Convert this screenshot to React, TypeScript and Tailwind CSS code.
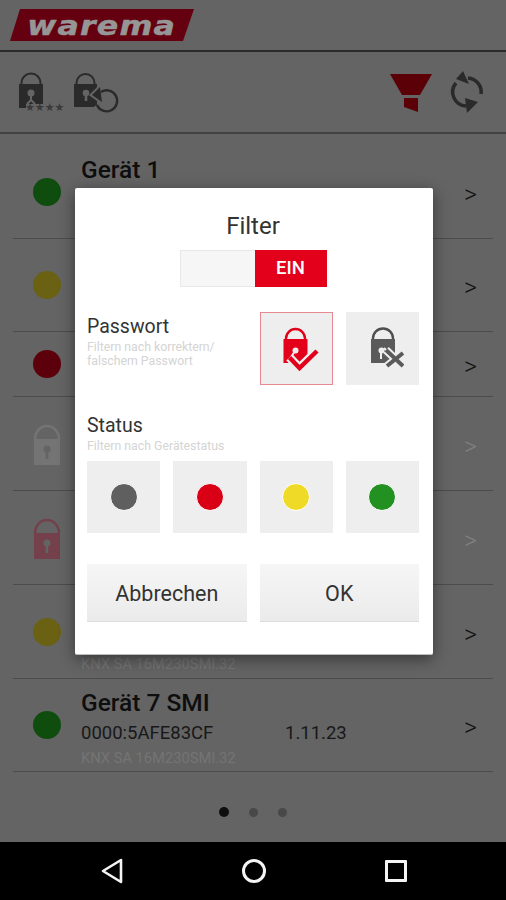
type Device = {
  name?: string;
  id?: string;
  addr?: string;
  model?: string;
  dot?: string;
  lock?: string;
  h: string;
  off?: boolean;
};

// only the text that isn't covered by the dialog
const devices: Device[] = [
  { name: 'Gerät 1', dot: 'bg-[#0f4d0f]', h: 'h-[93px]' },
  { dot: 'bg-[#6a6212]', h: 'h-[93px]' },
  { dot: 'bg-[#5c000b]', h: 'h-[65px]' },
  { lock: '#747474', h: 'h-[94px]', off: true },
  { lock: '#74404c', h: 'h-[94px]', off: true },
  { model: 'KNX SA 16M230SMI.32', dot: 'bg-[#6a6212]', h: 'h-[94px]' },
  { name: 'Gerät 7 SMI', id: '0000:5AFE83CF', addr: '1.11.23', model: 'KNX SA 16M230SMI.32', dot: 'bg-[#0f4d0f]', h: 'h-[93px]' },
];

const RowLock = ({ color }: { color: string }) => (
  <svg width="28" height="44" viewBox="0 0 28 44">
    <path d="M2 17 A12 13 0 0 1 26 17" fill="none" stroke={color} strokeWidth="2.5" />
    <rect x="1" y="17" width="26" height="26" fill={color} />
    <circle cx="14" cy="27" r="3.5" fill="#646464" />
    <rect x="12.7" y="28" width="2.6" height="9" fill="#646464" />
  </svg>
);

const ToolLockStars = () => (
  <div className="relative w-[48px] h-[44px]">
    <svg width="28" height="40" viewBox="0 0 28 40" className="absolute left-0 top-0">
      <path d="M3.5 14 V13 A9.5 9.5 0 0 1 22.5 13 V14" fill="none" stroke="#2a2a2a" strokeWidth="2" />
      <path d="M1 14 H25 V34 H8 V38 H1 Z" fill="#2a2a2a" />
      <circle cx="13" cy="23" r="3.5" fill="#646464" />
      <path d="M13 24 V31 M9 34 L13 30 L17 34" fill="none" stroke="#646464" strokeWidth="2" />
    </svg>
    <span className="absolute left-[7px] top-[32px] text-[11px] leading-[12px] text-[#3a3a3a] font-['DejaVu_Sans',sans-serif]">★★★★</span>
  </div>
);

const ToolLockReset = () => (
  <svg width="48" height="44" viewBox="0 0 48 44">
    <path d="M3.5 14 V13 A9 9 0 0 1 21.5 13 V14" fill="none" stroke="#2a2a2a" strokeWidth="2" />
    <rect x="1" y="14" width="23" height="23" fill="#2a2a2a" />
    <circle cx="13" cy="23" r="3.3" fill="#646464" />
    <rect x="11.7" y="23" width="2.6" height="8" fill="#646464" />
    <path d="M19 25 L27 17 L29 32 Z" fill="#646464" stroke="#646464" strokeWidth="4" />
    <path d="M28 22 A10.5 10.5 0 1 1 24 35" fill="none" stroke="#646464" strokeWidth="6" />
    <path d="M28 22 A10.5 10.5 0 1 1 24 35" fill="none" stroke="#2a2a2a" strokeWidth="2.4" />
    <path d="M19 25 L27 17 L29 32 Z" fill="#2a2a2a" />
  </svg>
);

const FilterIcon = () => (
  <svg width="46" height="42" viewBox="0 0 46 42">
    <path d="M2 3 H44 L32 24 H14 Z" fill="#5c0008" />
    <path d="M16 27 H30 V41 L16 36 Z" fill="#5c0008" />
  </svg>
);

const SyncIcon = () => (
  <svg width="38" height="44" viewBox="0 0 38 44">
    <path d="M20 8 A14 14 0 0 1 33 24" fill="none" stroke="#2a2a2a" strokeWidth="3.5" />
    <path d="M18 36 A14 14 0 0 1 8 13" fill="none" stroke="#2a2a2a" strokeWidth="3.5" />
    <path d="M15 1 L8 9 L21 14 Z" fill="#2a2a2a" />
    <path d="M17 28 L30 32 L19 43 Z" fill="#2a2a2a" />
  </svg>
);

const LockCheck = () => (
  <svg width="46" height="44" viewBox="0 0 46 44">
    <path d="M13 12 V11.5 A9.5 9.5 0 0 1 32 11.5 V12" fill="none" stroke="#e2001a" strokeWidth="2.4" />
    <rect x="10.5" y="12" width="24" height="24" fill="#e2001a" />
    <circle cx="22.5" cy="23.5" r="3" fill="#eeeeee" />
    <path d="M22 24 L16 33" stroke="#eeeeee" strokeWidth="2" />
    <path d="M16.5 30.5 L26.5 41 L44 24" fill="none" stroke="#eeeeee" strokeWidth="9" />
    <path d="M16.5 30.5 L26.5 41 L44 24" fill="none" stroke="#e2001a" strokeWidth="4.5" />
  </svg>
);

const LockCross = () => (
  <svg width="44" height="44" viewBox="0 0 44 44">
    <path d="M13 12 V11.5 A10 10 0 0 1 33 11.5 V12" fill="none" stroke="#4f4f4f" strokeWidth="2.4" />
    <rect x="11" y="12" width="24" height="24" fill="#5a5a5a" />
    <circle cx="21.5" cy="23.5" r="3" fill="#eeeeee" />
    <path d="M21 24 V32 M24 21 L33 30" stroke="#eeeeee" strokeWidth="2" />
    <path d="M26 23 L43 39 M43 26 L27 39" stroke="#eeeeee" strokeWidth="8" />
    <path d="M26 23 L43 39 M43 26 L27 39" stroke="#5a5a5a" strokeWidth="4" />
  </svg>
);

const Tile = ({ children, active, short }: { children?: React.ReactNode; active?: boolean; short?: boolean }) => (
  <div className={`${short ? 'h-[72px]' : 'h-[73px]'} flex items-center justify-center bg-[#eeeeee] ${active ? 'border border-[#e58a92]' : ''}`}>
    {children}
  </div>
);

const StatusDot = ({ color }: { color: string }) => (
  <div className={`w-[28px] h-[28px] rounded-full border border-white ${color}`} />
);

const FilterDialog = () => (
  <div className="absolute left-[75px] top-[188px] w-[358px] h-[467px] pl-[12px] pr-[14px] bg-white rounded-[2px] border-b border-[#bdbdbd] shadow-[0_4px_16px_rgba(0,0,0,0.45)] text-[#222222]">
    <div className="mt-[24px] text-center text-[24px] leading-[28px] text-[#333333]">Filter</div>

    <div className="mt-[10px] mx-auto w-[147px] h-[37px] flex border border-[#e8e8e8]">
      <div className="w-[74px] bg-[#f6f6f6]" />
      <div className="flex-1 -my-px -mr-px bg-[#e2001a] flex items-center justify-center text-white text-[18.5px] font-medium">EIN</div>
    </div>

    <div className="mt-[25px] grid grid-cols-4 gap-x-[13px]">
      <div className="col-span-2 pt-[2px]">
        <div className="text-[19.5px] leading-[26px] text-[#333333]">Passwort</div>
        <div className="text-[12.3px] leading-[14px] text-[#d4d4d4] w-[150px]">Filtern nach korrektem/ falschem Passwort</div>
      </div>
      <Tile active><LockCheck /></Tile>
      <Tile><LockCross /></Tile>
    </div>

    <div className="mt-[29px] text-[19.5px] leading-[24px] text-[#333333]">Status</div>
    <div className="mt-[1px] text-[12.3px] leading-[14px] text-[#d4d4d4]">Filtern nach Gerätestatus</div>
    <div className="mt-[8px] grid grid-cols-4 gap-x-[13px]">
      <Tile short><StatusDot color="bg-[#5f5f5f]" /></Tile>
      <Tile short><StatusDot color="bg-[#d90016]" /></Tile>
      <Tile short><StatusDot color="bg-[#f0da28]" /></Tile>
      <Tile short><StatusDot color="bg-[#229122]" /></Tile>
    </div>

    <div className="mt-[31px] grid grid-cols-2 gap-x-[13px]">
      <button className="h-[58px] pt-[4px] bg-gradient-to-b from-[#f6f6f6] to-[#ebebeb] border-b border-[#dddddd] text-[21.5px] text-[#333333]">Abbrechen</button>
      <button className="h-[58px] pt-[4px] bg-gradient-to-b from-[#f6f6f6] to-[#ebebeb] border-b border-[#dddddd] text-[21.5px] text-[#333333]">OK</button>
    </div>
  </div>
);

export default function App() {
  return (
    <div className="relative w-[506px] h-[900px] flex flex-col bg-[#646464] overflow-hidden font-['Roboto',sans-serif]">
      <div className="h-[52px] shrink-0 border-b-2 border-[#2a2a2a] pt-[9px] pl-[10px]">
        <div className="w-[184px] h-[32px] bg-[#640010] [clip-path:polygon(10px_0,100%_0,173px_100%,0_100%)] flex items-center justify-center">
          <span className="scale-x-[1.17] text-[27px] leading-none font-bold italic tracking-[1px] text-[#969696] [-webkit-text-stroke:0.5px_#969696] font-['DejaVu_Sans',sans-serif]">warema</span>
        </div>
      </div>

      <div className="h-[82px] shrink-0 border-b-2 border-[#424242] flex items-center justify-between pl-[18px] pr-[20px]">
        <div className="flex items-center gap-[7px]">
          <ToolLockStars />
          <ToolLockReset />
        </div>
        <div className="flex items-center gap-[14px]">
          <FilterIcon />
          <SyncIcon />
        </div>
      </div>

      <div className="pt-[12px] px-[13px]">
        {devices.map((d, i) => (
          <div key={i} className={`${d.h} flex items-center border-b border-[#4c4c4c]`}>
            <div className="w-[28px] ml-[20px] mr-[20px] shrink-0 flex justify-center">
              {d.lock ? <RowLock color={d.lock} /> : <div className={`w-[28px] h-[28px] rounded-full ${d.dot}`} />}
            </div>
            <div className="flex-1 pt-[6px]">
              <div className="h-[28px] text-[24.5px] leading-[28px] font-medium text-[#0e0e0e]">{d.name}</div>
              <div className="h-[24px] mt-[4px] flex text-[18.5px] leading-[24px] text-[#181818]">
                <span className="w-[204px]">{d.id}</span>
                <span>{d.addr}</span>
              </div>
              <div className="h-[20px] mt-[3px] text-[14.7px] leading-[20px] text-[#747474]">{d.model}</div>
            </div>
            <span className={`mr-[16px] pt-[6px] text-[25px] font-light ${d.off ? 'text-[#808080]' : 'text-[#101010]'}`}>&gt;</span>
          </div>
        ))}
      </div>

      <div className="flex-1 flex items-center justify-center gap-[20px] pt-[10px]">
        <div className="w-[10px] h-[10px] rounded-full bg-[#0e0e0e]" />
        <div className="w-[9px] h-[9px] rounded-full bg-[#484848]" />
        <div className="w-[9px] h-[9px] rounded-full bg-[#484848]" />
      </div>

      <div className="h-[58px] shrink-0 bg-black flex items-center justify-center pl-[1px]">
        <div className="w-[142px] flex justify-center">
          <svg width="24" height="26" viewBox="0 0 24 26"><path d="M21 2 V24 L3 13 Z" fill="none" stroke="#f4f4f4" strokeWidth="2.6" strokeLinejoin="round" /></svg>
        </div>
        <div className="w-[142px] flex justify-center">
          <div className="w-[24px] h-[24px] rounded-full border-[3px] border-[#f4f4f4]" />
        </div>
        <div className="w-[142px] flex justify-center">
          <div className="w-[22px] h-[22px] rounded-[1px] border-[3px] border-[#f4f4f4]" />
        </div>
      </div>

      <FilterDialog />
    </div>
  );
}
